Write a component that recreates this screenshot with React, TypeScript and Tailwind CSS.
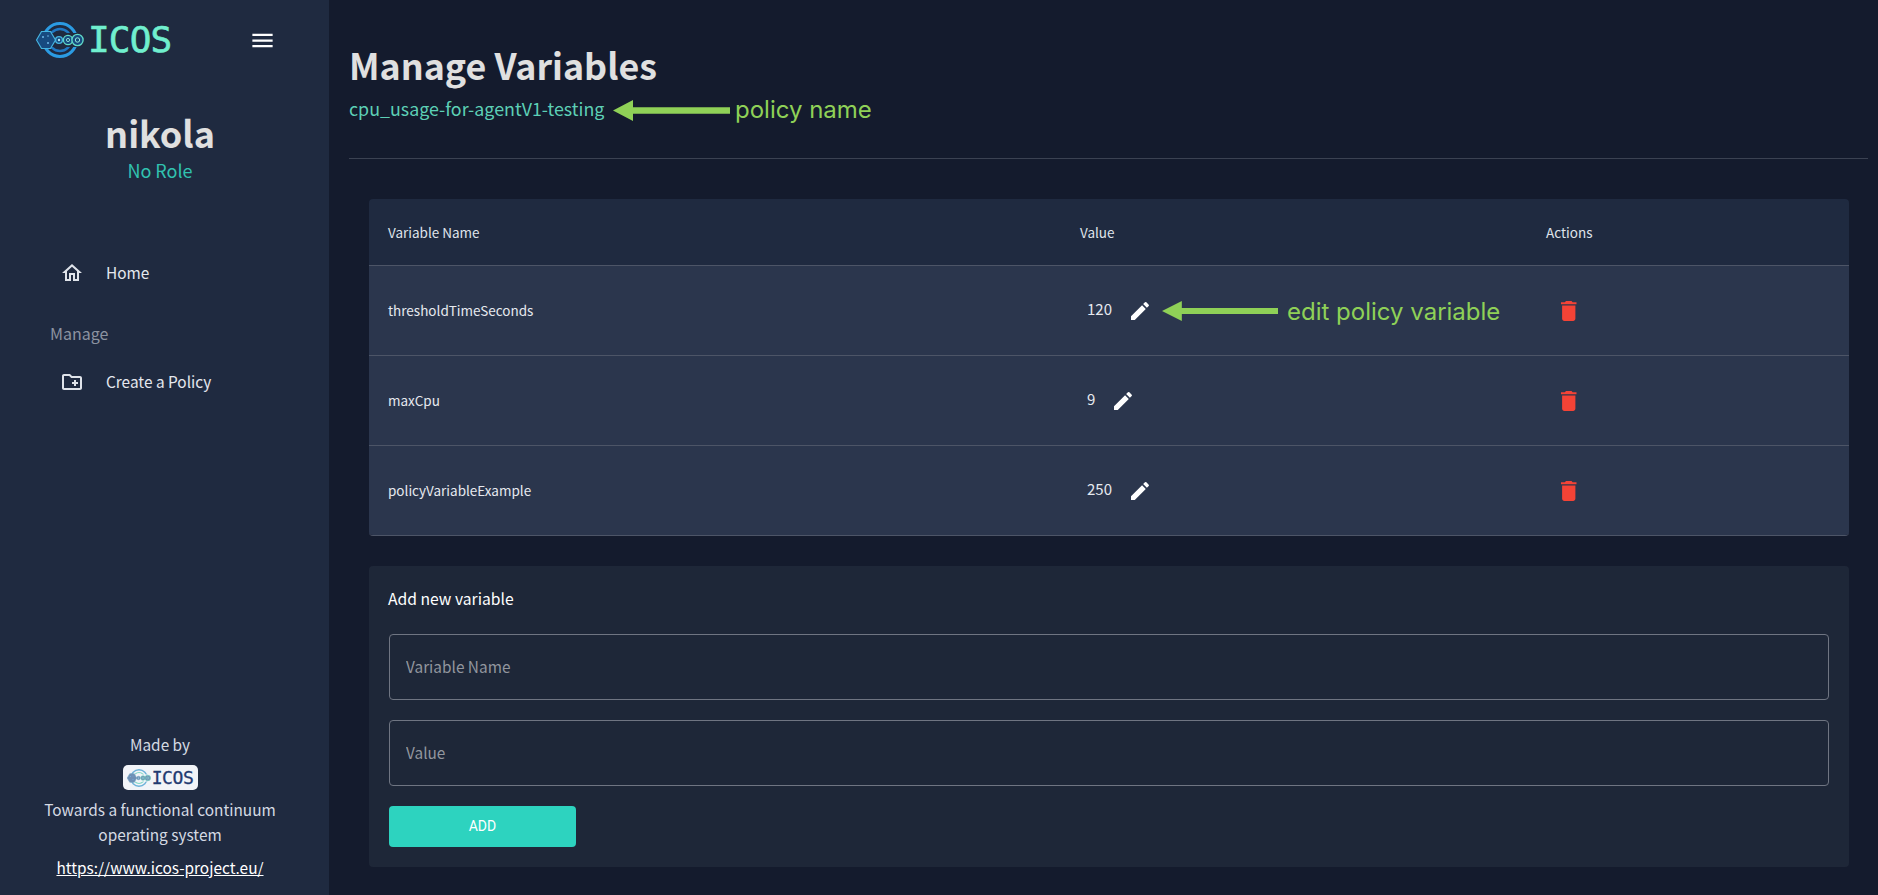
const LogoMark = ({ light = false, className = "" }: any) => {
  const ring = light ? "#6fb3d9" : "#2b9be3";
  const ring2 = light ? "#7fd8c4" : "#1f78c4";
  const hex = light ? "#6f8fb4" : "#174a80";
  const edge = light ? "#6fa0c0" : "#46b4e0";
  const fill = light ? "#f2f4f8" : "#1f2a40";
  const teal = light ? "#6fcdbb" : "#5fd8c8";
  return (
    <svg viewBox="0 0 48 36" className={className}>
      <circle cx="24" cy="18" r="16.5" fill="none" stroke={ring} strokeWidth="3" />
      <circle cx="24" cy="18" r="11" fill="none" stroke={ring2} strokeWidth="2.4" />
      <rect x="0" y="11" width="48" height="14" fill={fill} />
      <polygon points="0.5,18 5.5,9.5 14.5,9.5 19.5,18 14.5,26.5 5.5,26.5" fill={hex} stroke={edge} strokeWidth="1.2" />
      <circle cx="7" cy="15" r="1" fill="#6fb8e8" />
      <circle cx="12" cy="21" r="1" fill="#6fb8e8" />
      <circle cx="12" cy="14" r="0.8" fill="#6fb8e8" />
      <circle cx="23" cy="18" r="3.4" fill={hex} stroke={edge} strokeWidth="1.4" />
      <circle cx="23" cy="18" r="1.2" fill="#a8e6f0" />
      <circle cx="32" cy="18" r="4.6" fill={hex} stroke={teal} strokeWidth="1.3" />
      <circle cx="32" cy="18" r="1.6" fill="none" stroke="#8fe8d8" strokeWidth="0.9" />
      <circle cx="41.5" cy="18" r="5.6" fill={hex} stroke={teal} strokeWidth="1.4" />
      <circle cx="41.5" cy="18" r="2.2" fill="none" stroke="#8fe8d8" strokeWidth="1" />
    </svg>
  );
};

const NavItem = ({ label, d }: any) => (
  <div className="flex items-center h-[35px] pl-[60px]">
    <svg viewBox="0 0 24 24" className="w-6 h-6 fill-[#dfe3ea] shrink-0">
      <path d={d} />
    </svg>
    <span className="ml-[22px] text-[15.4px] text-[#e4e7ee]">{label}</span>
  </div>
);

const Sidebar = () => (
  <aside className="w-[329px] h-full shrink-0 bg-[#1f2a40] flex flex-col justify-between">
    <div>
      <div className="flex items-center h-[80px] pl-[36px] pr-[53px] justify-between">
        <div className="flex items-center">
          <LogoMark className="w-[48px] h-[36px]" />
          <span className="ml-[4px] font-['DejaVu_Sans_Mono',monospace] text-[36px] leading-none tracking-[-0.8px] [-webkit-text-stroke:0.6px_#70efcf] text-[#70efcf]">
            ICOS
          </span>
        </div>
        <svg viewBox="0 0 24 24" className="w-[27px] h-[27px] fill-white">
          <path d="M3 18h18v-2H3v2zm0-5h18v-2H3v2zm0-7v2h18V6H3z" />
        </svg>
      </div>
      <div className="mt-[26px] pr-[9px] text-center">
        <div className="text-[36px] leading-[52px] font-bold text-[#e0e0e0]">nikola</div>
        <div className="text-[18px] leading-[24px] text-[#31c2b0]">No Role</div>
      </div>
      <nav className="mt-[73px]">
        <NavItem
          label="Home"
          d="m12 5.69 5 4.5V18h-2v-6H9v6H7v-7.81l5-4.5M12 3 2 12h3v8h6v-6h2v6h6v-8h3L12 3z"
        />
        <div className="mt-[31px] mb-[19px] pl-[50px] text-[16px] leading-[24px] text-[#8c93a0]">Manage</div>
        <NavItem
          label="Create a Policy"
          d="M20 6h-8l-2-2H4c-1.11 0-1.99.89-1.99 2L2 18c0 1.11.89 2 2 2h16c1.11 0 2-.89 2-2V8c0-1.11-.89-2-2-2zm0 12H4V6h5.17l2 2H20v10zm-8-4h2v2h2v-2h2v-2h-2v-2h-2v2h-2z"
        />
      </nav>
    </div>
    <div className="flex flex-col items-center pr-[9px] pb-[15px] text-[15.4px] text-[#d5dae3]">
      <div className="leading-[26px]">Made by</div>
      <div className="mt-[8px] flex items-center justify-center w-[75px] h-[25px] bg-[#f2f4f8] rounded-[5px]">
        <LogoMark light className="w-[24px] h-[18px]" />
        <span className="ml-[1px] font-['DejaVu_Sans_Mono',monospace] text-[18px] leading-none tracking-[-0.4px] [-webkit-text-stroke:0.3px_#1f3a70] text-[#1f3a70]">
          ICOS
        </span>
      </div>
      <div className="mt-[7px] leading-[25px] text-center w-[250px]">Towards a functional continuum operating system</div>
      <a className="mt-[7px] leading-[26px] underline text-white">https://www.icos-project.eu/</a>
    </div>
  </aside>
);

const rows = [
  { name: "thresholdTimeSeconds", value: "120" },
  { name: "maxCpu", value: "9" },
  { name: "policyVariableExample", value: "250" },
];

const Row = ({ name, value }: any) => (
  <div className="grid grid-cols-[711px_466px_1fr] items-center h-[90px] bg-[#2b364d] border-t border-[#4d5567]">
    <div className="pl-[19px] text-[13.5px] text-[#e6e9ef]">{name}</div>
    <div className="flex items-center pl-[7px]">
      <span className="mb-[3px] text-[15px] text-[#e6e9ef]">{value}</span>
      <svg viewBox="0 0 24 24" className="w-6 h-6 fill-white ml-[16px]">
        <path d="M3 17.25V21h3.75L17.81 9.94l-3.75-3.75L3 17.25zM20.71 7.04c.39-.39.39-1.02 0-1.41l-2.34-2.34a.9959.9959 0 0 0-1.41 0l-1.83 1.83 3.75 3.75 1.83-1.83z" />
      </svg>
    </div>
    <div className="pl-[15px]">
      <svg viewBox="5 3 14 18" className="w-[15.5px] h-[20px] fill-[#f44336]">
        <path d="M6 19c0 1.1.9 2 2 2h8c1.1 0 2-.9 2-2V7H6v12zM19 4h-3.5l-1-1h-5l-1 1H5v2h14V4z" />
      </svg>
    </div>
  </div>
);

const Arrow = ({ className }: any) => (
  <svg viewBox="0 0 117 23" preserveAspectRatio="none" className={className}>
    <polygon points="0,11.5 20,0 20,8 117,8 117,15 20,15 20,23" fill="#8fd157" />
  </svg>
);

export default function App() {
  return (
    <div className="relative flex w-full h-screen overflow-hidden bg-[#141b2d] font-['Noto_Sans_CJK_SC','Noto_Sans',sans-serif]">
      <Sidebar />
      <main className="flex-1 pl-[20px] pr-[10px]">
        <div className="h-[159px] border-b border-[#3b4252] pt-[37px]">
          <h1 className="text-[35.8px] leading-[54px] font-bold text-[#e0e0e0]">Manage Variables</h1>
          <div className="mt-[3px] text-[17.85px] leading-[28px] text-[#5dd0b6]">cpu_usage-for-agentV1-testing</div>
        </div>
        <div className="mt-[40px] ml-[20px] mr-[19px] rounded-[4px] overflow-hidden border-b border-[#4d5567]">
          <div className="grid grid-cols-[711px_466px_1fr] items-center h-[66px] bg-[#1f2a40] text-[13.5px] text-[#dfe3ea]">
            <div className="pl-[19px]">Variable Name</div>
            <div>Value</div>
            <div>Actions</div>
          </div>
          {rows.map((r) => (
            <Row key={r.name} {...r} />
          ))}
        </div>
        <div className="mt-[30px] ml-[20px] mr-[19px] h-[301px] rounded-[4px] bg-[#1e2738] px-[20px] pt-[19px]">
          <div className="-ml-[1px] text-[15.7px] leading-[28px] text-white">Add new variable</div>
          <div className="mt-[21px] flex flex-col gap-[20px]">
            <input
              placeholder="Variable Name"
              className="w-full h-[66px] px-[16px] pb-[2px] rounded-[4px] border border-[#6f7582] bg-transparent text-[15.4px] placeholder:text-[#92969e]"
            />
            <input
              placeholder="Value"
              className="w-full h-[66px] px-[16px] pb-[2px] rounded-[4px] border border-[#6f7582] bg-transparent text-[15.4px] placeholder:text-[#92969e]"
            />
          </div>
          <button className="mt-[20px] w-[187px] h-[41px] rounded-[4px] bg-[#2dd3bf] text-[14px] font-normal text-white font-['Roboto',sans-serif]">
            ADD
          </button>
        </div>
      </main>
      {/* annotations drawn over the screenshot */}
      <Arrow className="absolute left-[613px] top-[100px] w-[117px] h-[21px]" />
      <span className="absolute left-[735px] top-[92px] font-['Inter',sans-serif] text-[24px] leading-[36px] text-[#8fd157]">
        policy name
      </span>
      <Arrow className="absolute left-[1162px] top-[301px] w-[116px] h-[20px]" />
      <span className="absolute left-[1287px] top-[294px] font-['Inter',sans-serif] text-[24px] leading-[36px] text-[#8fd157]">
        edit policy variable
      </span>
    </div>
  );
}
